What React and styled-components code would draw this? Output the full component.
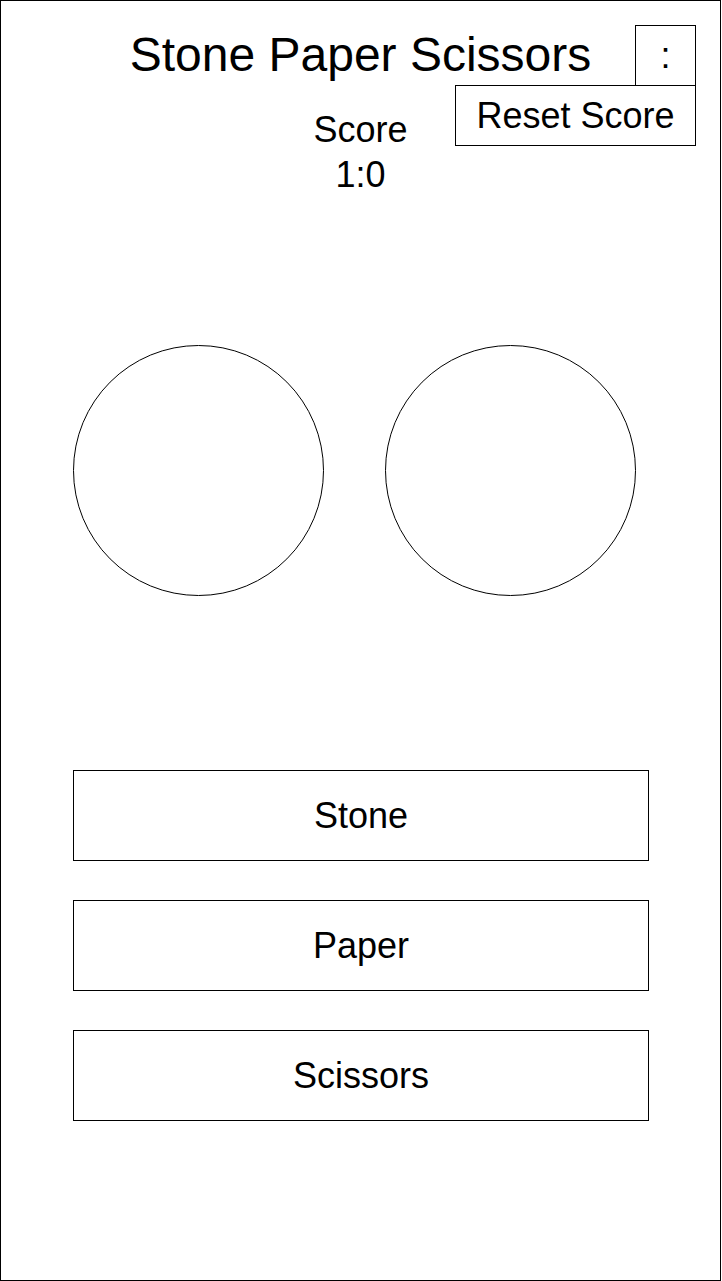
import React, { useState } from 'react';
import styled, { createGlobalStyle } from 'styled-components';

const GlobalStyle = createGlobalStyle`
  body {
    margin: 0;
    background: #fff;
    font-family: "Liberation Sans", Arial, sans-serif;
    color: #000;
  }
`;

const Frame = styled.div`
  position: relative;
  box-sizing: border-box;
  width: 721px;
  height: 1281px;
  border: 1px solid #000;
  padding-top: 30px;
  display: flex;
  flex-direction: column;
`;

const Title = styled.h1`
  margin: 0;
  font-size: 48px;
  font-weight: normal;
  line-height: 48px;
  text-align: center;
`;

const Score = styled.div`
  margin-top: 28px;
  font-size: 36px;
  line-height: 45px;
  text-align: center;
`;

const Menu = styled.div`
  position: absolute;
  top: 24px;
  right: 24px;
  display: flex;
  flex-direction: column;
  align-items: flex-end;
`;

const MenuButton = styled.button`
  box-sizing: border-box;
  width: 61px;
  height: 60px;
  padding: 0;
  border: 1px solid #000;
  border-bottom: none;
  background: #fff;
  font-family: inherit;
  font-size: 36px;
  color: #000;
`;

const MenuItem = styled.button`
  box-sizing: border-box;
  width: 241px;
  height: 61px;
  padding: 0;
  border: 1px solid #000;
  background: #fff;
  font-family: inherit;
  font-size: 36px;
  color: #000;
`;

const Hands = styled.div`
  margin-top: 148px;
  padding-left: 72px;
  display: flex;
  gap: 61px;
`;

const Hand = styled.div`
  box-sizing: border-box;
  width: 251px;
  height: 251px;
  border: 1px solid #000;
  border-radius: 50%;
`;

const Choices = styled.div`
  margin-top: 174px;
  padding-left: 72px;
  display: flex;
  flex-direction: column;
  gap: 39px;
`;

const Choice = styled.button`
  box-sizing: border-box;
  width: 576px;
  height: 91px;
  padding: 0;
  border: 1px solid #000;
  background: #fff;
  font-family: inherit;
  font-size: 36px;
  color: #000;
`;

const App = () => {
  const [score, setScore] = useState([1, 0]);

  return (
    <>
      <GlobalStyle />
      <Frame>
        <Title>Stone Paper Scissors</Title>
        <Score>
          Score
          <br />
          {score[0]}:{score[1]}
        </Score>
        <Menu>
          <MenuButton>:</MenuButton>
          <MenuItem onClick={() => setScore([0, 0])}>Reset Score</MenuItem>
        </Menu>
        <Hands>
          <Hand />
          <Hand />
        </Hands>
        <Choices>
          <Choice>Stone</Choice>
          <Choice>Paper</Choice>
          <Choice>Scissors</Choice>
        </Choices>
      </Frame>
    </>
  );
};

export default App;
